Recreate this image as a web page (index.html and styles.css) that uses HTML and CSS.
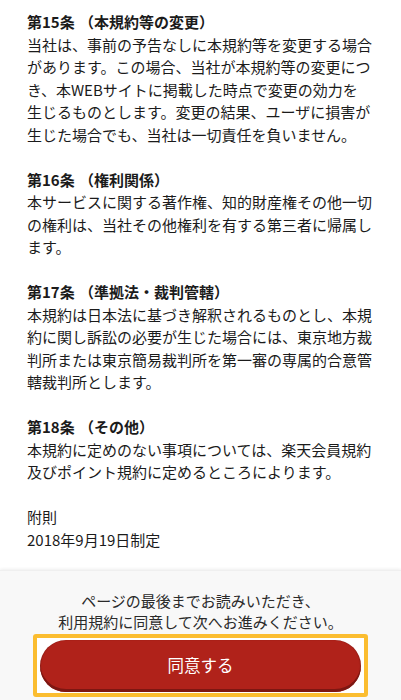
FILE: index.html
```html
<!DOCTYPE html>
<html lang="ja">
<head>
<meta charset="utf-8">
<title>利用規約</title>
<link rel="stylesheet" href="styles.css">
</head>
<body>
<main class="terms">
  <section class="article">
    <h2 class="article-title">第15条 （本規約等の変更）</h2>
    <p class="article-body">当社は、事前の予告なしに本規約等を変更する場合があります。この場合、当社が本規約等の変更につき、本WEBサイトに掲載した時点で変更の効力を<br>生じるものとします。変更の結果、ユーザに損害が<br>生じた場合でも、当社は一切責任を負いません。</p>
  </section>
  <section class="article">
    <h2 class="article-title">第16条 （権利関係）</h2>
    <p class="article-body">本サービスに関する著作権、知的財産権その他一切の権利は、当社その他権利を有する第三者に帰属します。</p>
  </section>
  <section class="article">
    <h2 class="article-title">第17条 （準拠法・裁判管轄）</h2>
    <p class="article-body">本規約は日本法に基づき解釈されるものとし、本規約に関し訴訟の必要が生じた場合には、東京地方裁判所または東京簡易裁判所を第一審の専属的合意管轄裁判所とします。</p>
  </section>
  <section class="article">
    <h2 class="article-title">第18条 （その他）</h2>
    <p class="article-body">本規約に定めのない事項については、楽天会員規約及びポイント規約に定めるところによります。</p>
  </section>
  <section class="article article-last">
    <p class="article-body">附則<br>2018年9月19日制定</p>
  </section>
</main>
<footer class="agree">
  <p class="agree-note">ページの最後までお読みいただき、<br>利用規約に同意して次へお進みください。</p>
  <div class="agree-focus">
    <button class="agree-button" type="button">同意する</button>
  </div>
</footer>
</body>
</html>
```
FILE: styles.css
```css
* { box-sizing: border-box; }

html, body {
  margin: 0;
  padding: 0;
  background: #ffffff;
}

body {
  font-family: "Noto Sans CJK JP", "Noto Sans", sans-serif;
  color: #1b1b1b;
  width: 401px;
  height: 700px;
  overflow: hidden;
  display: flex;
  flex-direction: column;
  text-spacing-trim: space-all;
}

.terms {
  padding: 11px 27px 19px 27px;
  font-size: 15px;
  line-height: 22.5px;
}

.article {
  margin: 0 0 22.5px 0;
}

.article-last {
  margin-bottom: 0;
}

.article-title {
  margin: 0;
  font-size: 15px;
  font-weight: 700;
  line-height: 22.5px;
  word-spacing: 1px;
}

.article-body {
  margin: 0;
  font-size: 15px;
  line-height: 22.5px;
}

.agree {
  flex: 1;
  background: #f8f8f8;
  box-shadow: 0 -1px 3px rgba(0, 0, 0, 0.07);
  border-top: 1px solid #efefef;
  padding: 19px 33px 3px 33px;
  display: flex;
  flex-direction: column;
  align-items: stretch;
}

.agree-note {
  margin: 0 0 2px 0;
  text-align: center;
  font-size: 15px;
  line-height: 21px;
  color: #2a2a2a;
}

.agree-focus {
  border: 4px solid #fbbd30;
  border-radius: 3px;
  background: #ffffff;
  padding: 2px 3px 1px 3px;
  height: 63px;
}

.agree-button {
  display: block;
  width: 100%;
  height: 52px;
  border: none;
  border-radius: 26px;
  background: #b0221a;
  box-shadow: inset 0 -3px 0 #7d1712, inset 1px 0 1px rgba(0,0,0,0.15), inset -1px 0 1px rgba(0,0,0,0.15);
  color: #ffffff;
  font-family: "Noto Sans CJK JP", "Noto Sans", sans-serif;
  font-size: 16.5px;
  line-height: 1;
  padding: 0 0 2px 0;
}
```
